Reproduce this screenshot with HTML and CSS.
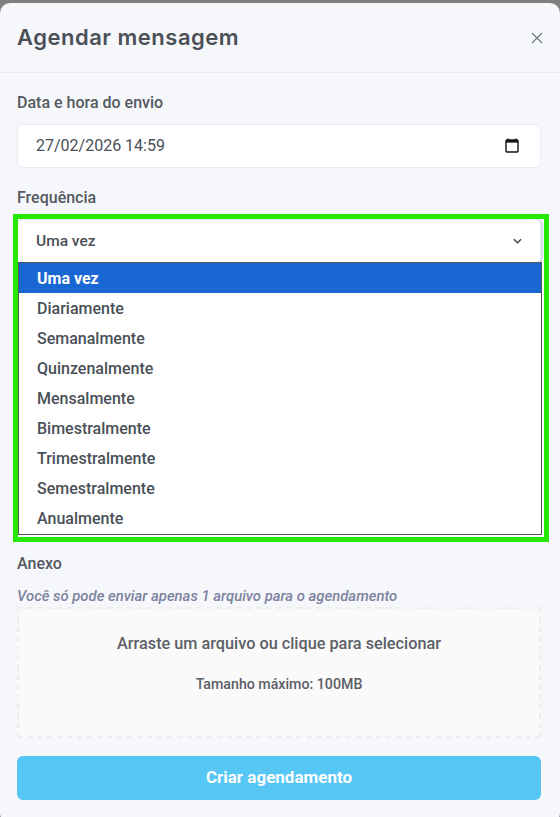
FILE: index.html
```html
<!DOCTYPE html>
<html lang="en">
<head>
    <meta charset="UTF-8">
    <meta name="viewport" content="width=device-width, initial-scale=1.0">
    <title>Agendar mensagem</title>
    <link rel="stylesheet" href="styles.css">
</head>
<body>

    <div class="modal">
        <div class="modal-header">
            <h1>Agendar mensagem</h1>
            <svg class="close-icon" width="12" height="12" viewBox="0 0 12 12">
                <path d="M1 1L11 11M11 1L1 11" stroke="#6b7280" stroke-width="1.1" fill="none"/>
            </svg>
        </div>

        <div class="modal-body">
            <div class="form-group">
                <label>Data e hora do envio</label>
                <div class="field">
                    <span>27/02/2026 14:59</span>
                    <svg class="calendar-icon" width="14" height="15" viewBox="0 0 14 15">
                        <path d="M3 0.5V2M11 0.5V2" stroke="#111" stroke-width="1.4" fill="none"/>
                        <rect x="1" y="2" width="12" height="12" rx="1" fill="#fff" stroke="#111" stroke-width="1.4"/>
                        <rect x="1" y="2" width="12" height="2.6" fill="#111"/>
                    </svg>
                </div>
            </div>

            <div class="form-group frequency">
                <label>Frequência</label>
                <div class="select-wrap">
                    <div class="field select-field">
                        <span>Uma vez</span>
                        <svg width="9" height="6" viewBox="0 0 10 6">
                            <path d="M1 1L5 5L9 1" stroke="#444" stroke-width="1.5" fill="none"/>
                        </svg>
                    </div>
                    <ul class="dropdown">
                        <li class="selected">Uma vez</li>
                        <li>Diariamente</li>
                        <li>Semanalmente</li>
                        <li>Quinzenalmente</li>
                        <li>Mensalmente</li>
                        <li>Bimestralmente</li>
                        <li>Trimestralmente</li>
                        <li>Semestralmente</li>
                        <li>Anualmente</li>
                    </ul>
                    <div class="highlight"></div>
                </div>
            </div>

            <div class="attachment">
                <label>Anexo</label>
                <p class="hint">Você só pode enviar apenas 1 arquivo para o agendamento</p>
                <div class="dropzone">
                    <p class="drop-title">Arraste um arquivo ou clique para selecionar</p>
                    <p class="drop-size">Tamanho máximo: 100MB</p>
                </div>
            </div>

            <button type="button">Criar agendamento</button>
        </div>
    </div>

</body>
</html>
```

FILE: styles.css
```css
* {
    margin: 0;
    padding: 0;
    box-sizing: border-box;
    font-family: Roboto, sans-serif;
}

body {
    background-color: #808080;
    padding-top: 3px;
    height: 817px;
    overflow: hidden;
}

.modal {
    height: 820px;
    background-color: #f5f7fb;
    border-radius: 10px;
}

.modal-header {
    display: flex;
    align-items: center;
    justify-content: space-between;
    height: 70px;
    padding: 0 17px 2px 17px;
    border-bottom: 1px solid #e8ebf4;
}

.close-icon {
    margin-top: 2px;
}

h1 {
    font-family: Inter, sans-serif;
    font-size: 22px;
    font-weight: 600;
    letter-spacing: 0.5px;
    color: #4b5057;
}

.modal-body {
    padding: 19px 19px 0 17px;
}

.form-group {
    margin-bottom: 19px;
}

label {
    display: block;
    height: 21px;
    margin-bottom: 11px;
    font-size: 16px;
    font-weight: 500;
    line-height: 21px;
    color: #54585f;
}

.field {
    display: flex;
    align-items: center;
    justify-content: space-between;
    height: 44px;
    padding: 0 21px 2px 18px;
    background-color: #fff;
    border: 1px solid #e8ebf4;
    border-radius: 6px;
    font-size: 16px;
    color: #495057;
}

.frequency {
    height: 366px;
    margin-bottom: 0;
}

.select-wrap {
    position: relative;
}

.select-field {
    padding: 0 18px 0 18px;
    font-size: 15.5px;
    font-weight: 500;
    box-shadow: 2px 0 0 #d3deeb;
}

.dropdown {
    position: absolute;
    top: 43px;
    left: 1px;
    width: 524px;
    height: 273px;
    list-style: none;
    background-color: #fff;
    border: 1px solid #555;
    box-shadow: 1px 1px 0 #fff;
}

.dropdown li {
    height: 30px;
    padding: 1px 0 0 18px;
    font-size: 16px;
    font-weight: 500;
    line-height: 30px;
    color: #495057;
}

.dropdown li.selected {
    background-color: #1967d2;
    color: #fff;
    font-weight: 700;
}

.highlight {
    position: absolute;
    top: -5px;
    left: -4px;
    width: 536px;
    height: 328px;
    border: 5px solid #27e800;
    pointer-events: none;
}

.attachment label {
    margin-bottom: 12px;
}

.hint {
    height: 20px;
    font-size: 14.85px;
    font-style: italic;
    font-weight: 500;
    line-height: 20px;
    color: #7d82a0;
}

.dropzone {
    height: 131px;
    margin-top: 1px;
    padding-top: 25px;
    background-color: #fafafa;
    border: 2px dashed #eeeeee;
    text-align: center;
    color: #5c5f66;
}

.drop-title {
    font-size: 16.25px;
    font-weight: 500;
    line-height: 20px;
}

.drop-size {
    margin-top: 20px;
    font-size: 14.2px;
    font-weight: 500;
    line-height: 20px;
}

button {
    display: block;
    width: 100%;
    height: 44px;
    margin-top: 18px;
    padding-bottom: 2px;
    background-color: #56c6f5;
    color: white;
    border: none;
    border-radius: 6px;
    font-size: 17px;
    font-weight: 700;
}
```
